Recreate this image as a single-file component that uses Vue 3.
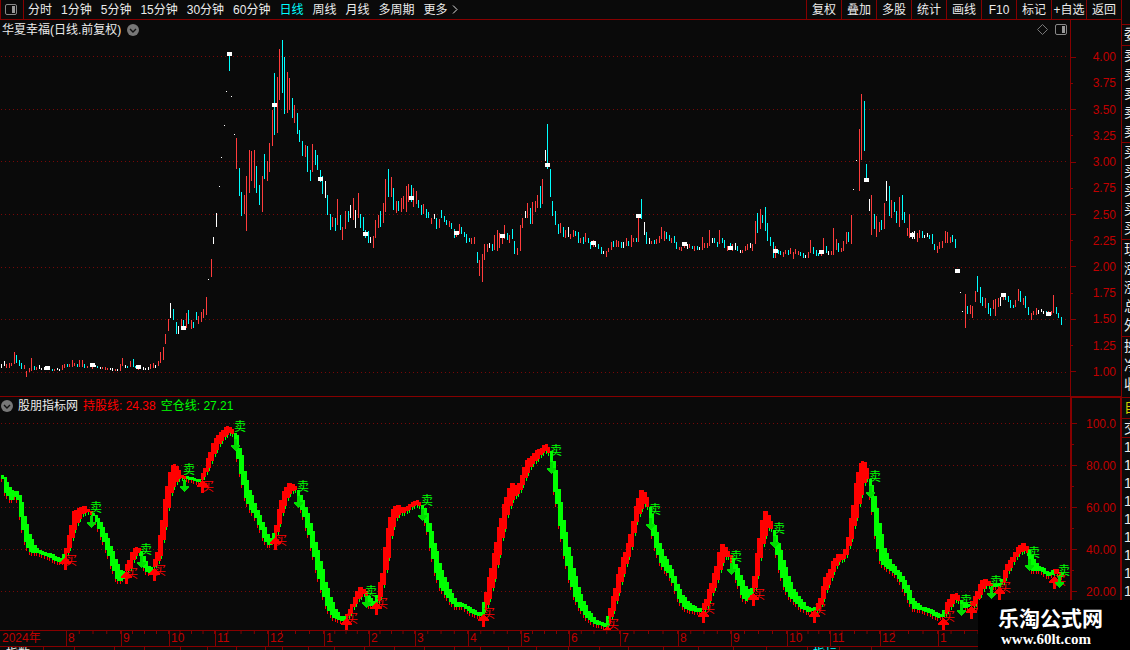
<script setup>
import { computed, ref } from 'vue'

const periods = ['分时', '1分钟', '5分钟', '15分钟', '30分钟', '60分钟', '日线', '周线', '月线', '多周期', '更多']
const activePeriod = ref('日线')
const tools = ['复权', '叠加', '多股', '统计', '画线', 'F10', '标记', '+自选', '返回']

const priceScale = ['4.00', '3.75', '3.50', '3.25', '3.00', '2.75', '2.50', '2.25', '2.00', '1.75', '1.50', '1.25', '1.00']
const priceGrid = [56, 109, 161, 214, 267, 319, 372]
const indexScale = ['100.0', '', '80.00', '', '60.00', '', '40.00', '', '20.00']
const indexGrid = [423, 465, 507, 549, 591]

const months = [
  { label: '2024年', span: 66, plain: true },
  { label: '8', span: 55 },
  { label: '9', span: 48 },
  { label: '10', span: 46 },
  { label: '11', span: 53 },
  { label: '12', span: 56 },
  { label: '1', span: 45 },
  { label: '2', span: 46 },
  { label: '3', span: 53 },
  { label: '4', span: 53 },
  { label: '5', span: 48 },
  { label: '6', span: 51 },
  { label: '7', span: 58 },
  { label: '8', span: 53 },
  { label: '9', span: 56 },
  { label: '10', span: 43 },
  { label: '11', span: 50 },
  { label: '12', span: 58 },
  { label: '1', span: 54 },
  { label: '', span: 129 }
]

const footSpans = [43, 31, 40, 30, 36, 27, 29, 29, 17, 26, 26, 30, 30, 30, 30, 26, 28, 28, 32, 31, 29, 35, 35, 35, 33, 41, 32, 32, 250]
const footLabels = { 0: '指数', 26: '指标' }

const quoteGroups = [
  { rows: ['委'] },
  { rows: ['卖', '卖', '卖', '卖', '卖'] },
  { rows: ['买', '买', '买', '买', '买'] },
  { rows: ['现', '涨', '涨', '总', '外'] },
  { rows: ['换', '净', '收'], kind: 'wide' },
  { rows: ['自'], kind: 'yellow' },
  { rows: ['交'], kind: 'tight' },
  { rows: ['1', '1', '1', '1', '1', '1', '1', '1', '1'], kind: 'tight' }
]

// one bar per trading day: x, colour (r up, c down, w flat), high - low
const barData = `
1w364-368 4w361-366 6r364-368 9r363-368 11r363-366 14r352-364 16c355-363 19c360-366 21c363-369 24r365-369
26r371-377 29r368-372 31r358-371 34c366-370 36r367-370 39w365-369 41w368-370 44w367-370 52c369-371 54r369-371
57w368-370 59w369-371 62r365-370 64r364-368 67c364-367 69r364-367 72r360-367 74r363-366 77c364-367 79r360-367
82r360-367 84c364-368 87r366-368 92r367-369 95w365-367 97c366-368 100w367-369 102r367-369 105r367-370 107r368-370
110w368-370 112w368-371 115r369-371 117w369-371 120r364-371 122r358-366 125w365-368 127c366-368 130r361-367 133c359-367
135c366-368 138r368-370 143w367-370 145w368-370 148w367-370 150r364-369 153r363-368 155w365-368 158r361-366 160r352-363
163r347-360 165r334-344 168r319-331 170w303-318 173c309-320 176c322-334 178w326-334 181r319-326 183c320-326 186r313-328
188c310-324 191r320-329 193c322-328 196c312-320 198r316-324 201r312-322 203r309-318 206r297-315 208w279-280 211r259-277
213w237-244 216w213-227 219w186-187 221w157-158 224w125-126 226w91-92 229c56-71 231w96-97 234w134-135 236r138-169
239c168-196 241c192-216 244r195-214 246r176-231 249r150-193 251r151-181 254r150-188 256c166-193 259c185-205 262r176-212
264c154-179 267r161-181 269r143-172 272r110-146 274c73-135 277r77-133 279r49-100 282c40-93 284c57-114 287r72-113
289r78-110 292c98-118 294r105-123 297c113-134 299c130-142 302c141-156 305r145-157 307c146-172 310c170-181 312r144-172
315c150-165 317c155-170 320c170-182 322c176-194 325w181-198 327c195-215 330c214-230 332r217-227 335c218-231 337r199-225
340c215-230 342r227-240 345r211-229 348c211-222 350w205-218 353r198-220 355w210-228 358r193-218 360c214-228 363c217-231
365c230-238 368c231-243 370w237-243 373r236-248 375r220-238 378r215-228 380c211-227 383r203-223 385r179-212 388c169-197
391r177-197 393c188-210 396r201-213 398c201-211 401r198-212 403r196-209 406r186-212 408r184-202 411c185-202 413r188-207
416r191-204 418c200-208 421c205-215 423r204-214 426c209-218 428c212-218 431r218-224 434w214-219 436c218-229 439r219-228
441c210-218 444c216-222 446c220-225 449r221-227 451c223-229 454c229-238 456r235-237 459r224-234 461c227-234 464c232-237
466c234-243 469c238-242 471r238-244 474r237-244 477c252-263 479r260-276 482r254-282 484r244-260 487r244-252 489w243-248
492c244-251 494r235-250 497r230-251 499r233-248 502r238-244 504r225-239 507c233-240 509r235-243 512c229-239 514c241-254
517r248-255 520r225-251 522r218-228 525w211-218 527r203-218 530c208-224 532r202-224 535r201-212 537r195-208 540c186-208
542r179-204 545w150-161 547c124-169 550c169-197 552c201-216 555c211-225 558c224-234 560r223-233 563c227-237 565r230-238
568w227-237 570r234-239 573r230-237 575c231-236 578c232-243 580r238-243 583c237-244 585r233-242 588c238-243 590c242-249
593r240-247 595w245-247 598c244-249 601c247-254 603w251-254 606r251-257 608r248-252 611r242-250 613c241-247 616r240-247
618r241-247 621c242-248 623w242-248 626r238-246 628c241-246 631r235-247 633r238-242 636c238-242 638r218-242 641c199-219
644w222-235 646c232-244 649w238-244 651r241-244 654c240-244 656r239-244 659r236-243 661r227-239 664r231-241 666c232-239
669c235-241 671r238-243 674c236-243 676c242-249 679r247-250 681r247-251 684r245-248 687w244-249 689r244-248 692c246-249
694r246-251 697c246-250 699w247-250 702r237-250 704r243-248 707r243-248 709r230-246 712w238-243 714c238-243 717c242-247
719r230-244 722c238-243 724c240-248 727r246-251 730c243-249 732r244-251 735w243-250 737c246-251 740w250-253 742r250-253
745r246-251 747r244-250 750w243-248 752r244-251 755r221-244 757c213-233 760r209-229 762c215-223 765c207-231 767c223-241
770c237-246 773c242-258 775r246-258 778c250-254 780c251-255 783r252-257 785r250-254 788c250-255 790r248-254 793r252-259
795r249-254 798r251-255 800c252-256 803c253-258 805w255-258 808r252-258 810r240-253 813c247-254 816c250-256 818c253-256
821r253-256 823r238-252 826c246-253 828w251-255 831r251-255 833r228-255 836r239-250 838c243-252 841r248-252 843r241-251
846r232-244 848c232-242 851r215-244 853w189-190 856w160-161 859r129-191 861r94-160 864c101-151 866c164-178 869w199-211
871r195-235 874c214-229 876r216-237 879r222-232 881c220-230 884r203-229 886w181-201 889c186-216 891r200-218 894c202-212
896c211-223 899r197-227 902c195-220 904c212-223 907r228-236 909r214-238 912w232-239 914w231-239 917r233-242 919r230-238
922c231-238 924w235-238 927w233-237 929c235-239 932c234-244 934c244-250 937r246-253 939r242-249 942r241-248 945r231-243
947r232-243 950r237-243 952c235-242 955c239-248 960w292-293 962w311-312 965r294-328 967c306-314 970r305-314 972r306-318
975r291-302 977c276-292 980c287-303 982c297-306 985r298-308 988c303-314 990c308-316 993r300-309 995r299-316 998r298-307
1000w297-306 1003r297-300 1005c297-300 1008c296-302 1010c300-308 1013c305-308 1015r300-307 1018r289-301 1020c291-302 1023r298-305
1025c296-308 1028c307-315 1031r313-320 1033r311-315 1036r308-315 1038w310-314 1041w309-312 1043w311-314 1046c311-313 1048r311-313
1051r311-315 1053r295-313 1056c307-314 1058c313-318 1061c317-325`

// white blocks drawn every 18 bars
const blocks = [
  [45, 366], [90, 363], [136, 365], [181, 326], [227, 52], [272, 103], [318, 177], [363, 232],
  [409, 196], [454, 231], [500, 234], [545, 163], [591, 241], [636, 214], [682, 242], [728, 246],
  [773, 249], [819, 250], [864, 178], [910, 233], [955, 269], [1001, 293], [1046, 312]
]

const barPaths = computed(() => {
  const paths = { r: '', c: '', w: '' }
  for (const [, x, kind, high, low] of barData.matchAll(/(\d+)([rcw])(\d+)-(\d+)/g)) {
    paths[kind] += `M${x} ${high}h1V${low}h-1z`
  }
  return paths
})

// ribbon outline: colour of the run, then x:top:bottom
const ribbonData = [
  ['g', '1:475:477 4:477:480 6:482:493 9:487:497 11:490:500 13:491:498 16:491:494 18:493:500 20:497:511 23:512:530 26:524:542 29:534:551 32:542:553 37:549:553 43:552:555 50:553:557 56:557:561 62:558:562'],
  ['r', '63:557:559 66:548:556 70:530:545 74:511:530 78:509:520 83:505:513 87:509:511 89:510:512'],
  ['g', '91:512:514 96:516:518 100:522:532 104:531:542 108:540:553 112:551:566 115:559:574 118:566:581 121:572:581 124:571:574'],
  ['r', '125:568:571 129:560:570 133:549:560 136:547:554 139:548:552'],
  ['g', '140:551:553 143:556:560 146:563:572 149:567:573 152:567:568'],
  ['r', '153:565:567 157:552:563 160:535:556 163:513:540 166:492:520 169:475:502 172:466:489 175:464:483 178:470:479 182:476:478'],
  ['g', '184:476:478 190:477:479 196:479:480 200:479:480'],
  ['r', '201:478:480 205:468:474 209:455:466 213:443:456 218:435:446 223:430:438 227:426:434 230:427:432 232:431:433'],
  ['g', '233:432:434 236:435:441 238:444:459 241:455:474 244:471:490 247:484:502 250:493:508 255:505:516 260:517:527 265:529:541 269:538:545 272:540:542'],
  ['r', '273:537:540 277:521:532 280:503:520 285:488:502 290:482:492 294:486:490 296:488:490'],
  ['g', '297:490:491 300:495:503 305:507:520 310:523:539 315:542:562 320:561:583 325:582:601 330:597:613 335:609:619 340:616:620 344:618:621'],
  ['r', '345:616:619 349:611:615 353:602:607 357:591:600 360:587:597 363:589:594 365:591:593'],
  ['g', '366:593:595 369:597:606 372:601:606 375:601:603'],
  ['r', '376:599:602 379:587:600 382:573:590 385:547:576 388:528:558 391:512:536 394:507:523 397:505:515 402:507:513 407:507:511 412:502:506 417:500:504 419:503:505'],
  ['g', '420:504:506 424:508:514 427:516:527 430:527:543 435:547:570 440:567:587 445:580:593 451:593:602 456:602:607 463:603:607 470:608:612 477:612:616 482:613:615'],
  ['r', '483:607:612 488:582:603 493:558:584 498:532:560 503:508:533 508:490:511 512:483:500 516:486:495 520:482:490 524:467:480 528:458:470 532:456:464 536:450:460 541:449:454 545:444:451 548:448:450'],
  ['g', '550:451:455 553:461:472 555:470:492 557:483:504 560:502:526 563:520:545 566:538:562 571:560:584 576:580:600 581:597:610 588:611:619 595:619:624 602:623:626 606:624:627'],
  ['r', '607:620:625 610:608:620 614:592:608 618:574:593 622:560:578 627:547:560 632:526:544 636:506:522 640:490:511 643:490:504 646:497:503'],
  ['g', '648:504:507 651:514:526 655:528:545 659:543:558 663:554:567 668:563:573 672:571:580 676:581:591 680:592:602 686:600:609 692:605:611 700:609:612'],
  ['r', '702:607:610 706:599:608 710:586:598 715:570:585 719:552:574 722:544:563 725:547:557 728:553:556 730:555:557'],
  ['g', '731:556:559 734:562:570 738:570:583 742:580:595 745:586:601 749:591:597'],
  ['r', '752:588:592 755:570:588 758:545:570 761:524:552 764:512:540 766:510:531 769:517:527 771:525:527'],
  ['g', '772:527:529 775:535:543 779:546:566 783:560:582 787:573:592 791:585:598 796:594:603 801:600:608 806:606:611 810:608:612 813:608:610'],
  ['r', '814:608:611 819:602:609 822:590:602 825:577:592 829:571:583 833:561:572 838:554:562 843:554:559 847:543:553 850:525:543 853:505:530 856:483:518 859:466:504 862:461:490 865:462:480 867:473:477'],
  ['g', '868:476:479 871:485:497 874:496:520 877:514:544 880:528:559 883:546:565 888:558:569 893:565:572 900:573:580 907:585:595 913:600:609 920:606:610 928:608:612 933:611:615 938:613:618 941:615:617'],
  ['r', '943:612:616 948:600:610 952:594:604 956:593:599 958:597:600'],
  ['g', '960:600:602 964:603:608 968:604:607'],
  ['r', '970:603:606 974:598:606 978:588:599 982:580:590 986:579:585 990:583:586'],
  ['g', '992:584:586 998:584:586'],
  ['r', '1001:582:585 1004:573:581 1007:564:573 1013:555:562 1018:547:554 1023:543:551 1026:546:549'],
  ['g', '1028:550:553 1033:559:571 1038:566:571 1043:568:572 1049:573:577 1051:573:575'],
  ['r', '1052:570:574 1056:569:573 1059:572:574'],
  ['g', '1060:573:575 1064:574:577']
]

const ribbonPaths = computed(() => {
  const points = ribbonData.flatMap(([kind, list]) =>
    list.split(' ').map((p) => {
      const [x, top, bottom] = p.split(':').map(Number)
      return { kind, x, top, bottom }
    })
  )
  const at = (x) => {
    let k = 0
    while (k < points.length - 2 && points[k + 1].x <= x) k++
    const a = points[k]
    const b = points[k + 1]
    const t = Math.min(1, (x - a.x) / (b.x - a.x))
    return {
      kind: a.kind,
      top: a.top + (b.top - a.top) * t,
      bottom: a.bottom + (b.bottom - a.bottom) * t
    }
  }
  const paths = { r: '', g: '', rEdge: '', gEdge: '' }
  for (let i = 0; i < 420; i++) {
    const x = Math.round(1 + i * 2.53)
    const from = at(x)
    const to = at(x + 2)
    const top = Math.round(Math.min(from.top, to.top))
    const bottom = Math.max(top + 3, Math.round(Math.max(from.bottom, to.bottom)))
    paths[from.kind] += `M${x} ${top}h3V${bottom}h-3z`
    if (from.kind === 'r') paths.gEdge += `M${x + 1} ${bottom - 1}h1v4h-1z`
    else paths.rEdge += `M${x} ${bottom - 1}h1v4h-1z`
  }
  return paths
})

// arrow x, arrow tip y, label top y
const sells = [
  [91, 528, 502], [141, 568, 544], [184, 492, 464], [235, 451, 421], [298, 508, 481], [366, 608, 586],
  [422, 521, 495], [551, 474, 445], [650, 530, 504], [731, 575, 551], [774, 548, 523], [870, 498, 471],
  [961, 616, 595], [991, 599, 576], [1029, 571, 547], [1059, 588, 565]
]
const buys = [
  [65, 557, 555], [126, 571, 568], [154, 568, 565], [202, 480, 481], [275, 537, 535], [346, 618, 613],
  [376, 602, 598], [483, 614, 608], [607, 626, 619], [703, 610, 603], [753, 593, 589], [814, 610, 604],
  [943, 618, 611], [971, 606, 602], [999, 587, 582], [1054, 576, 575]
]
</script>

<template>
  <div class="terminal">
    <main class="main">
      <nav class="toolbar">
        <button type="button" class="panel-button" aria-label="侧栏">
          <svg width="12" height="11" viewBox="0 0 12 11">
            <rect x="0.5" y="0.5" width="11" height="10" rx="1.5" fill="none" stroke="#888" />
            <rect x="7" y="2" width="3" height="7" fill="#999" />
          </svg>
        </button>
        <div class="periods">
          <button
            v-for="period in periods"
            :key="period"
            type="button"
            :class="['period', { active: period === activePeriod }]"
            @click="activePeriod = period"
          >
            {{ period }}
            <svg v-if="period === '更多'" class="more" width="6" height="9" viewBox="0 0 6 9">
              <path d="M1 0.5L5 4.5L1 8.5" fill="none" stroke="#ddd" />
            </svg>
          </button>
        </div>
        <div class="tools">
          <button v-for="tool in tools" :key="tool" type="button" class="tool">{{ tool }}</button>
        </div>
      </nav>

      <section class="panel">
        <div class="pane">
          <header class="pane-head price-head">
            <span>华夏幸福(日线.前复权)</span>
            <button type="button" class="round" aria-label="展开">
              <svg width="12" height="12" viewBox="0 0 12 12">
                <circle cx="6" cy="6" r="6" fill="#777" />
                <path d="M3 5L6 8L9 5" fill="none" stroke="#111" stroke-width="1.4" />
              </svg>
            </button>
            <div class="head-icons">
              <svg width="11" height="11" viewBox="0 0 11 11">
                <path d="M5.5 0.5L10.5 5.5L5.5 10.5L0.5 5.5Z" fill="none" stroke="#777" />
              </svg>
              <svg width="12" height="11" viewBox="0 0 12 11">
                <rect x="0.5" y="0.5" width="11" height="10" rx="1.5" fill="none" stroke="#888" />
                <rect x="7" y="2" width="3" height="7" fill="#999" />
              </svg>
            </div>
          </header>
          <svg class="chart" viewBox="0 39 1070 357" shape-rendering="crispEdges">
            <path v-for="y in priceGrid" :key="y" :d="`M1 ${y}.5H1067`" class="grid-line" />
            <path :d="barPaths.r" fill="#ff3c3c" />
            <path :d="barPaths.c" fill="#00ffff" />
            <path :d="barPaths.w" fill="#ffffff" />
            <rect v-for="[x, y] in blocks" :key="x" :x="x" :y="y" width="5" height="4" fill="#ffffff" />
          </svg>
        </div>
        <div class="scale price-scale">
          <div v-for="(label, i) in priceScale" :key="label" :class="['scale-row', { minor: i % 2 }]">{{ label }}</div>
        </div>
      </section>

      <section class="panel">
        <div class="pane index-pane">
          <header class="pane-head index-head">
            <button type="button" class="round" aria-label="展开">
              <svg width="12" height="12" viewBox="0 0 12 12">
                <circle cx="6" cy="6" r="6" fill="#777" />
                <path d="M3 5L6 8L9 5" fill="none" stroke="#111" stroke-width="1.4" />
              </svg>
            </button>
            <span>股朋指标网</span>
            <span class="hold">持股线: 24.38</span>
            <span class="empty">空仓线: 27.21</span>
          </header>
          <svg class="chart" viewBox="0 414 1070 216" shape-rendering="crispEdges">
            <path v-for="y in indexGrid" :key="y" :d="`M1 ${y}.5H1067`" class="grid-line" />
            <path :d="ribbonPaths.rEdge" fill="#ff0000" />
            <path :d="ribbonPaths.gEdge" fill="#00ff00" />
            <path :d="ribbonPaths.r" fill="#ff0000" />
            <path :d="ribbonPaths.g" fill="#00ff00" />
            <g v-for="[x, y, top] in buys" :key="`b${x}`" fill="#ff0000">
              <text :x="x" :y="top + 10">买</text>
              <path :d="`M${x} ${y}h1l5 6v1h-4v6h-3v-6h-4v-1z`" />
            </g>
            <g v-for="[x, y, top] in sells" :key="`s${x}`">
              <text :x="x - 1" :y="top + 10" fill="#00ff00">卖</text>
              <path :d="`M${x} ${y}h1l4 -5v-1h-3v-6h-3v6h-3v1z`" fill="#00dc00" />
            </g>
          </svg>
        </div>
        <div class="scale index-scale">
          <div v-for="(label, i) in indexScale" :key="i" :class="['scale-row', { minor: i % 2 }]">{{ label }}</div>
        </div>
      </section>

      <div class="months">
        <div
          v-for="(month, i) in months"
          :key="i"
          :class="['month', { plain: month.plain || !month.label }]"
          :style="{ flexGrow: month.span }"
        >
          {{ month.label }}
        </div>
      </div>
      <div class="foot">
        <div v-for="(span, i) in footSpans" :key="i" class="foot-cell" :style="{ flexGrow: span }">{{ footLabels[i] }}</div>
      </div>
    </main>

    <aside class="quotes">
      <div v-for="(group, i) in quoteGroups" :key="i" :class="['quote-group', group.kind]">
        <div v-for="(row, j) in group.rows" :key="j" class="quote-row">{{ row }}</div>
      </div>
    </aside>

    <div class="site">
      <strong class="site-name">乐淘公式网</strong>
      <span class="site-url">www.60lt.com</span>
    </div>
  </div>
</template>

<style>
body {
  margin: 0;
  background: #0a0a0a;
}
</style>

<style scoped>
.terminal {
  position: relative;
  display: grid;
  grid-template-columns: minmax(0, 1fr) 9px;
  min-height: 100vh;
  overflow: hidden;
  background: #0a0a0a;
  color: #ececec;
  font-family: 'Liberation Sans', 'Noto Sans CJK SC', sans-serif;
  font-size: 12px;
  line-height: 16px;
}

button {
  padding: 0;
  border: 0;
  background: none;
  color: inherit;
  font: inherit;
  white-space: nowrap;
  cursor: pointer;
}

svg {
  display: block;
}

/* ===== Toolbar ===== */
.toolbar {
  display: flex;
  box-sizing: border-box;
  height: 20px;
  border-bottom: 1px solid #860000;
  border-left: 1px solid #860000;
}

.panel-button {
  display: flex;
  align-items: center;
  padding: 0 6px 1px 4px;
  border-right: 1px solid #860000;
}

.periods {
  display: flex;
  gap: 9px;
  padding-left: 4px;
}

.period {
  display: flex;
  align-items: center;
}

.period.active {
  color: #00ffff;
}

.more {
  margin-left: 4px;
}

.tools {
  display: flex;
  margin-left: auto;
}

.tool {
  box-sizing: border-box;
  width: 35px;
  border-left: 1px solid #860000;
}

/* ===== Chart panels ===== */
.panel {
  display: grid;
  grid-template-columns: minmax(0, 1fr) 51px;
}

.pane-head {
  display: flex;
  align-items: center;
  white-space: nowrap;
}

.price-head {
  gap: 6px;
  height: 19px;
  padding: 0 3px 0 2px;
}

.index-head {
  gap: 5px;
  height: 17px;
  padding-left: 1px;
}

.index-pane {
  border-top: 1px solid #860000;
}

.head-icons {
  display: flex;
  gap: 7px;
  margin-left: auto;
}

.hold {
  color: #ff0000;
}

.empty {
  color: #00ff00;
}

.chart {
  width: 100%;
  height: auto;
}

.grid-line {
  stroke: #780808;
  stroke-dasharray: 1 3;
}

/* ===== Value scales ===== */
.scale {
  display: flex;
  flex-direction: column;
  box-sizing: border-box;
  color: #c00000;
}

.price-scale {
  padding: 24px 5px 11px 0;
  border-left: 1px solid #860000;
}

.index-scale {
  padding: 15px 4px 28px 0;
  border: solid #860000;
  border-width: 2px 1px 0 2px;
}

.scale-row {
  display: flex;
  flex: 1;
  align-items: center;
  justify-content: space-between;
}

.scale-row::before {
  content: '';
  width: 5px;
  height: 1px;
  background: #860000;
}

.scale-row.minor::before {
  width: 2px;
}

/* ===== Date axis ===== */
.months {
  display: flex;
  border: solid #860000;
  border-width: 1px 0;
  color: #c00000;
}

.month {
  flex: 1 1 0;
  min-width: 0;
  height: 15px;
  background: linear-gradient(90deg, transparent calc(100% - 1px), #860000 0) 0 0 / 25% 3px repeat-x;
  box-shadow: inset 1px 0 #860000;
  line-height: 15px;
  text-indent: 2px;
  white-space: nowrap;
}

.month.plain {
  background: none;
  box-shadow: none;
}

.foot {
  display: flex;
  height: 3px;
  overflow: hidden;
}

.foot-cell {
  flex: 1 1 0;
  min-width: 0;
  line-height: 14px;
  text-indent: 6px;
}

.foot-cell + .foot-cell {
  box-shadow: inset 1px 0 #860000;
  color: #00ffff;
}

/* ===== Quote strip ===== */
.quotes {
  box-sizing: border-box;
  padding-top: 24px;
  overflow: hidden;
  border-left: 1px solid #860000;
}

.quote-group {
  padding-bottom: 1px;
  border-top: 1px solid #860000;
}

.quote-group.wide {
  padding-bottom: 3px;
}

.quote-group.tight {
  padding-bottom: 0;
}

.quote-group.yellow {
  color: #d0d000;
}

.quote-row {
  padding-left: 2px;
  font-size: 14px;
  line-height: 19px;
  white-space: nowrap;
}

.tight .quote-row {
  line-height: 18px;
}

/* ===== Site mark ===== */
.site {
  position: absolute;
  right: 0;
  bottom: 0;
  box-sizing: border-box;
  width: 152px;
  height: 50px;
  padding: 7px 0 0 20px;
  background: #000000;
  color: #ffffff;
}

.site-name {
  display: block;
  font-size: 21px;
  line-height: 24px;
}

.site-url {
  display: block;
  padding-left: 3px;
  font-family: 'Liberation Serif', serif;
  font-size: 15px;
  font-weight: bold;
  line-height: 16px;
}
</style>
